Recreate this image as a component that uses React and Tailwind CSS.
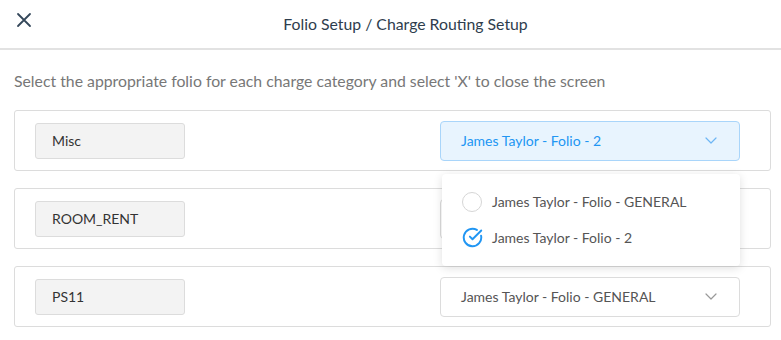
import React from "react";

const Chevron = ({ className }) => (
  <svg width="12" height="7" viewBox="0 0 12 7" fill="none" className={className}>
    <path d="M1 1l5 5 5-5" stroke="currentColor" strokeWidth="1.2" strokeLinecap="round" strokeLinejoin="round" />
  </svg>
);

const CheckCircle = () => (
  <svg width="21" height="21" viewBox="0 0 24 24" fill="none" stroke="#2196f3" strokeWidth="2.2" strokeLinecap="round" strokeLinejoin="round">
    <path d="M21.801 10A10 10 0 1 1 17 3.335" />
    <path d="m9 11 3 3L22 4" />
  </svg>
);

const Select = ({ value, open }) => (
  <div
    className={
      open
        ? "w-[300px] h-10 flex items-center justify-between pl-5 pr-[22px] rounded-[4px] border border-[#a9d5fa] bg-[#e8f4fe] text-[#2196f3]"
        : "w-[300px] h-10 flex items-center justify-between pl-5 pr-[22px] rounded-[4px] border border-[#dcdcdc] bg-white text-[#555]"
    }
  >
    <span className="text-[14px]">{value}</span>
    <Chevron className={open ? "text-[#6db6f5]" : "text-[#999]"} />
  </div>
);

const Row = ({ label, value, open, children }) => (
  <div className="h-[61px] flex items-center justify-between pl-5 pr-[30px] border border-[#dcdcdc] rounded-[3px]">
    <div className="w-[150px] h-9 flex items-center px-4 bg-[#f3f3f3] border border-[#dcdcdc] rounded-[3px] text-[14px] text-[#333]">
      {label}
    </div>
    <div className="relative">
      <Select value={value} open={open} />
      {children}
    </div>
  </div>
);

const App = () => {
  return (
    <div className="w-[781px] h-[340px] bg-white overflow-hidden" style={{ fontFamily: "Lato, 'Noto Sans', sans-serif" }}>
      <div className="relative h-12 flex items-center justify-center border-b-2 border-[#e2e2e2] box-content">
        <button className="absolute left-[16px] top-[12px] text-[#34475a]">
          <svg width="16" height="16" viewBox="0 0 16 16" fill="none">
            <path d="M2 2l12 12M14 2L2 14" stroke="currentColor" strokeWidth="1.8" strokeLinecap="round" />
          </svg>
        </button>
        <h1 className="ml-[30px] text-[15.8px] text-[#2e3d4d]">Folio Setup / Charge Routing Setup</h1>
      </div>

      <div className="px-[14px] pr-[10px]">
        <p className="mt-[21px] text-[15.8px] leading-5 text-[#777]">
          Select the appropriate folio for each charge category and select 'X' to close the screen
        </p>

        <div className="mt-[19px] flex flex-col gap-[17px]">
          <Row label="Misc" value="James Taylor - Folio - 2" open>
            <div className="absolute z-10 left-[2px] top-[53px] w-[298px] h-[92px] bg-white rounded-[4px] shadow-[0_2px_10px_rgba(0,0,0,0.13)] pt-[10px]">
              <div className="h-9 flex items-center pl-5">
                <span className="w-5 h-5 rounded-full border border-[#d6d6d6]" />
                <span className="ml-[10px] text-[14px] text-[#555]">James Taylor - Folio - GENERAL</span>
              </div>
              <div className="h-9 flex items-center pl-5">
                <CheckCircle />
                <span className="ml-[9px] text-[14px] text-[#555]">James Taylor - Folio - 2</span>
              </div>
            </div>
          </Row>
          <Row label="ROOM_RENT" value="James Taylor - Folio - 2" />
          <Row label="PS11" value="James Taylor - Folio - GENERAL" />
        </div>
      </div>
    </div>
  );
};

export default App;
